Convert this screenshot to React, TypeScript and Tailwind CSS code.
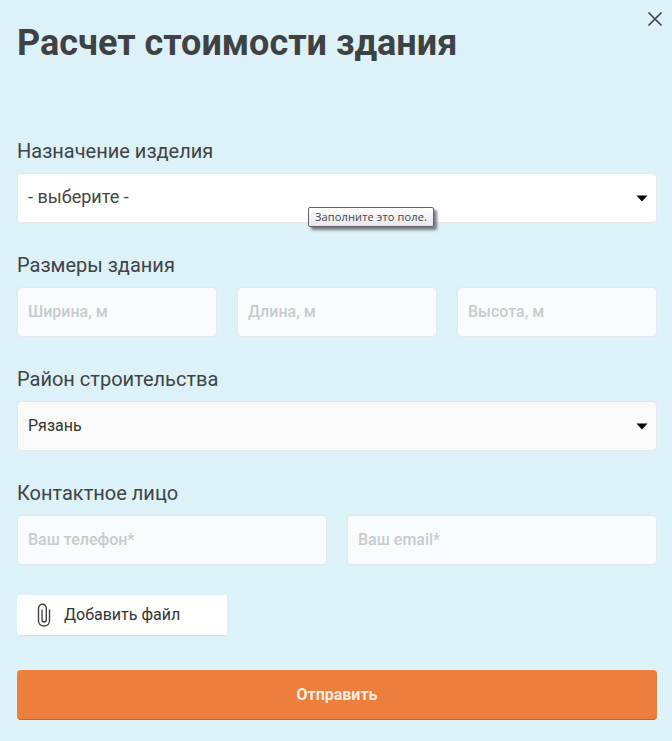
import React from "react";

function Caret() {
  return (
    <svg width="12" height="7" viewBox="0 0 12 7" className="absolute right-[8px] top-[21px]">
      <path d="M0.5 0.5H11.5L6 6.5Z" fill="#000" />
    </svg>
  );
}

function Label({ children }: { children: React.ReactNode }) {
  return <div className="h-[22px] mb-[11px] text-[20px] leading-[23px] text-[#3f4444]">{children}</div>;
}

function Field({ text }: { text: string }) {
  return (
    <div className="flex-1 h-[50px] rounded-[4px] border border-[#e2e8ec] bg-[#f8fcff] pl-[10px] flex items-center text-[16px] font-medium text-[#c8cbcd]">
      {text}
    </div>
  );
}

export default function App() {
  return (
    <div className="relative w-[672px] h-[741px] overflow-hidden bg-[#ddf1f9] pl-[17px] pr-[15px] font-['Roboto',sans-serif]">
      <svg width="16" height="16" viewBox="0 0 16 16" className="absolute left-[647px] top-[11px]" fill="none" stroke="#3c4043" strokeWidth="1.6">
        <path d="M1.5 1.5L14.5 14.5M14.5 1.5L1.5 14.5" />
      </svg>

      <h1 className="pt-[22px] h-[140px] text-[36px] leading-[42px] font-bold text-[#3f4243]">Расчет стоимости здания</h1>

      <Label>Назначение изделия</Label>
      <div className="relative h-[50px] mb-[31px] rounded-[4px] border border-[#e2e8ec] bg-white pl-[10px] pb-[3px] flex items-center text-[18px] text-[#444]">
        - выберите -
        <Caret />
        <div className="absolute left-[290px] top-[33px] h-[20px] w-[126px] rounded-[2px] border border-[#5f6368] bg-gradient-to-b from-white to-[#e6e6ee] shadow-[3px_3px_3px_rgba(60,60,70,0.65)] flex items-center justify-center text-[11px] tracking-[0.15px] font-['Open_Sans',sans-serif] text-[#444]">
          Заполните это поле.
        </div>
      </div>

      <Label>Размеры здания</Label>
      <div className="flex gap-[20px] mb-[31px]">
        <Field text="Ширина, м" />
        <Field text="Длина, м" />
        <Field text="Высота, м" />
      </div>

      <Label>Район строительства</Label>
      <div className="relative h-[50px] mb-[31px] rounded-[4px] border border-[#e2e8ec] bg-[#fafafa] pl-[10px] flex items-center text-[16px] text-[#333]">
        Рязань
        <Caret />
      </div>

      <Label>Контактное лицо</Label>
      <div className="flex gap-[20px] mb-[30px]">
        <Field text="Ваш телефон*" />
        <Field text="Ваш email*" />
      </div>

      <div className="w-[210px] h-[40px] rounded-[2px] bg-white flex items-center pl-[20px] text-[16px] text-[#333] shadow-[0_1px_1px_rgba(0,0,0,0.05)]">
        <svg width="14" height="24" viewBox="0 0 14 24" fill="none" stroke="#444" strokeWidth="1.4" strokeLinecap="round" className="mr-[13px]">
          <path d="M12.5 7V17.5C12.5 20.6 10.2 23 7 23C3.8 23 1.5 20.6 1.5 17.5V6C1.5 3.2 3 1.2 5.3 1.2C7.6 1.2 9.3 3.2 9.3 6V16.5C9.3 18 8.4 19 7.1 19C5.8 19 5 18 5 16.5V7" />
        </svg>
        Добавить файл
      </div>

      <div className="mt-[35px] h-[50px] rounded-[4px] bg-[#ec7e3e] border-b border-[#b56a40] flex items-center justify-center text-[16px] font-bold text-[#fdeee0]">
        Отправить
      </div>
    </div>
  );
}
